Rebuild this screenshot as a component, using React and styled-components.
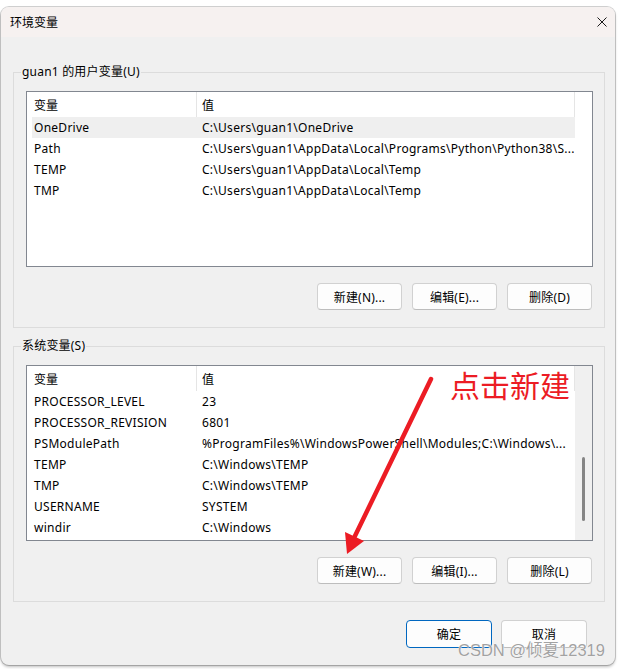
import React from 'react'
import styled, { createGlobalStyle } from 'styled-components'

const GlobalStyle = createGlobalStyle`
  html, body {
    margin: 0;
    padding: 0;
    background: #ffffff;
  }
  body {
    font-family: "Noto Sans", "Noto Sans CJK SC", sans-serif;
    font-size: 12px;
    color: #000;
  }
`

const Page = styled.div`
  width: 620px;
  height: 669px;
  overflow: hidden;
  position: relative;
`

const Window = styled.div`
  position: relative;
  margin: 7px 0 0 1px;
  width: 614px;
  height: 658px;
  box-sizing: border-box;
  border-radius: 8px;
  background: #f0f0f0;
  box-shadow: 0 0 0 1px rgba(0, 0, 0, 0.18), 0 2px 3px rgba(0, 0, 0, 0.25);
  overflow: hidden;
  display: flex;
  flex-direction: column;
`

const TitleBar = styled.div`
  height: 30px;
  flex: none;
  display: flex;
  align-items: center;
  justify-content: space-between;
  padding: 0 8px 0 9px;
  background: #f6f1f0;
`

const Title = styled.span`
  font-size: 12px;
  line-height: 16px;
  font-family: "Noto Sans CJK SC", sans-serif;
`

const CloseIcon = () => (
  <svg width="10" height="10" viewBox="0 0 10 10">
    <path d="M0.5 0.5 L9.5 9.5 M9.5 0.5 L0.5 9.5" stroke="#1a1a1a" strokeWidth="1" />
  </svg>
)

const Content = styled.div`
  flex: 1;
  display: flex;
  flex-direction: column;
  padding: 27px 10px 0 12px;
`

const Group = styled.fieldset`
  margin: 0;
  padding: 11px 11px 17px 12px;
  border: 1px solid #dcdcdc;
  min-width: 0;
  & + & {
    margin-top: 10px;
  }
`

const Legend = styled.legend`
  margin-left: -5px;
  padding: 0 1px;
  font-size: 12px;
  line-height: 16px;
  letter-spacing: 0.2px;
  font-family: "Noto Sans", "Noto Sans CJK SC", sans-serif;
`

const ListView = styled.div`
  height: 176px;
  box-sizing: border-box;
  border: 1px solid #828790;
  background: #fff;
  display: flex;
`

const ListBody = styled.div`
  flex: 1;
  padding-left: 5px;
  overflow: hidden;
`

const Row = styled.div`
  display: flex;
  height: ${p => (p.$header ? 25 : 21)}px;
  align-items: center;
  width: 543px;
  background: ${p => (p.$selected ? '#efefef' : 'transparent')};
  letter-spacing: ${p => (p.$header ? 0 : 0.27)}px;
  font-family: ${p => (p.$header ? '"Noto Sans CJK SC", sans-serif' : '"Noto Sans", "Noto Sans CJK SC", sans-serif')};
`

const NameCell = styled.div`
  width: 165px;
  flex: none;
  padding-left: 2px;
  box-sizing: border-box;
  white-space: nowrap;
  overflow: hidden;
  align-self: stretch;
  display: flex;
  align-items: center;
  border-right: ${p => (p.$header ? '1px solid #e5e5e5' : '1px solid transparent')};
`

const ValueCell = styled.div`
  flex: 1;
  padding-left: 5px;
  white-space: nowrap;
  overflow: hidden;
  align-self: stretch;
  display: flex;
  align-items: center;
  border-right: ${p => (p.$header ? '1px solid #e5e5e5' : '1px solid transparent')};
`

const ScrollTrack = styled.div`
  width: 17px;
  flex: none;
  background: #f0f0f0;
  display: flex;
  justify-content: center;
  padding-top: 91px;
  box-sizing: border-box;
`

const ScrollThumb = styled.div`
  width: 3px;
  height: 64px;
  border-radius: 2px;
  background: #858585;
`

const ButtonRow = styled.div`
  display: flex;
  justify-content: flex-end;
  gap: 10px;
  margin-top: 16px;
  padding-right: 1px;
`

const Button = styled.button`
  width: ${p => (p.$wide ? 86 : 85)}px;
  height: ${p => (p.$wide ? 28 : 27)}px;
  box-sizing: border-box;
  border-radius: 4px;
  border: 1px solid ${p => (p.$primary ? '#0067c0' : '#d1d1d1')};
  border-bottom-color: ${p => (p.$primary ? '#0067c0' : '#bdbdbd')};
  background: #fdfdfd;
  font-family: "Noto Sans", "Noto Sans CJK SC", sans-serif;
  font-size: 12px;
  letter-spacing: 0.2px;
  color: #000;
  padding: 0;
`

const Footer = styled.div`
  display: flex;
  justify-content: flex-end;
  gap: 9px;
  margin-top: 18px;
  padding-right: 18px;
`

const Annotation = styled.div`
  position: absolute;
  left: 449px;
  top: 360px;
  font-family: "Noto Sans CJK SC", sans-serif;
  font-size: 30px;
  line-height: 34px;
  color: #ec1c24;
  pointer-events: none;
`

const ArrowLayer = styled.svg`
  position: absolute;
  left: 0;
  top: 0;
  pointer-events: none;
`

const Watermark = styled.div`
  position: absolute;
  left: 458px;
  top: 639px;
  font-family: "Liberation Sans", "Noto Sans CJK SC", sans-serif;
  font-size: 16.5px;
  line-height: 22px;
  color: #a2a2a2;
  text-shadow: 0 0 1px #fff, 0 0 1px #fff;
  white-space: nowrap;
  pointer-events: none;
`

const userVars = [
  ['OneDrive', 'C:\\Users\\guan1\\OneDrive'],
  ['Path', 'C:\\Users\\guan1\\AppData\\Local\\Programs\\Python\\Python38\\S...'],
  ['TEMP', 'C:\\Users\\guan1\\AppData\\Local\\Temp'],
  ['TMP', 'C:\\Users\\guan1\\AppData\\Local\\Temp'],
]

const systemVars = [
  ['PROCESSOR_LEVEL', '23'],
  ['PROCESSOR_REVISION', '6801'],
  ['PSModulePath', '%ProgramFiles%\\WindowsPowerShell\\Modules;C:\\Windows\\...'],
  ['TEMP', 'C:\\Windows\\TEMP'],
  ['TMP', 'C:\\Windows\\TEMP'],
  ['USERNAME', 'SYSTEM'],
  ['windir', 'C:\\Windows'],
]

const VarList = ({ rows, selected, scroll }) => (
  <ListView>
    <ListBody>
      <Row $header>
        <NameCell $header>变量</NameCell>
        <ValueCell $header>值</ValueCell>
      </Row>
      {rows.map(([name, value], i) => (
        <Row key={name + i} $selected={i === selected}>
          <NameCell>{name}</NameCell>
          <ValueCell>{value}</ValueCell>
        </Row>
      ))}
    </ListBody>
    {scroll && (
      <ScrollTrack>
        <ScrollThumb />
      </ScrollTrack>
    )}
  </ListView>
)

export default function App() {
  return (
    <Page>
      <GlobalStyle />
      <Window>
        <TitleBar>
          <Title>环境变量</Title>
          <CloseIcon />
        </TitleBar>
        <Content>
          <Group>
            <Legend>guan1 的用户变量(U)</Legend>
            <VarList rows={userVars} selected={0} />
            <ButtonRow>
              <Button>新建(N)...</Button>
              <Button>编辑(E)...</Button>
              <Button>删除(D)</Button>
            </ButtonRow>
          </Group>
          <Group>
            <Legend>系统变量(S)</Legend>
            <VarList rows={systemVars} selected={-1} scroll />
            <ButtonRow>
              <Button>新建(W)...</Button>
              <Button>编辑(I)...</Button>
              <Button>删除(L)</Button>
            </ButtonRow>
          </Group>
          <Footer>
            <Button $wide $primary>确定</Button>
            <Button $wide>取消</Button>
          </Footer>
        </Content>
        <Annotation>点击新建</Annotation>
        <ArrowLayer width="614" height="658" viewBox="0 0 614 658">
          <line x1="430" y1="372" x2="353" y2="531" stroke="#ec1c24" strokeWidth="4.5" strokeLinecap="round" />
          <polygon points="346,547 344,525 363,534" fill="#ec1c24" />
        </ArrowLayer>
      </Window>
      <Watermark>CSDN @倾夏12319</Watermark>
    </Page>
  )
}
